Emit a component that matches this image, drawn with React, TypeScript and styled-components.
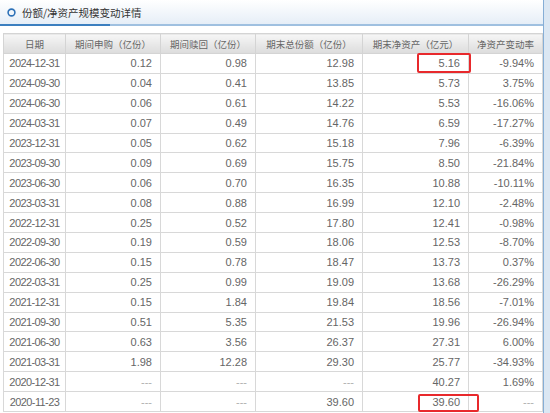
import React from "react";
import styled, { createGlobalStyle } from "styled-components";

const Global = createGlobalStyle`
  html, body { margin: 0; padding: 0; background: #fff; }
  body { font-family: "Liberation Sans", "Noto Sans CJK SC", sans-serif; }
`;

const Page = styled.div`
  display: flex;
  width: 550px;
  height: 413px;
  overflow: hidden;
`;

const Main = styled.div`
  width: 543px;
  display: flex;
  flex-direction: column;
`;

const Side = styled.div`
  flex: 1;
  border-left: 1px solid #86aed6;
  background: #dbe7f3;
`;

const TitleBar = styled.div`
  height: 24px;
  display: flex;
  align-items: center;
  gap: 6px;
  padding-left: 7px;
  background: linear-gradient(#ffffff, #e6eef7);
  border-bottom: 2px solid #9fc0e0;
  position: relative;
  &::after {
    content: "";
    position: absolute;
    left: 0;
    bottom: -2px;
    width: 110px;
    height: 2px;
    background: #3c7fc0;
  }
`;

const TitleText = styled.span`
  font-family: "Noto Sans CJK SC", sans-serif;
  font-size: 10.5px;
  color: #333;
`;

const TableWrap = styled.div`
  position: relative;
  margin: 7px 0 0 3px;
  width: 539px;
`;

const Table = styled.table`
  border-collapse: collapse;
  width: 539px;
  table-layout: fixed;
`;

const Th = styled.th`
  height: 19px;
  padding: 0;
  font-weight: normal;
  font-family: "Noto Sans CJK SC", sans-serif;
  font-size: 9.5px;
  color: #666;
  text-align: center;
  background: linear-gradient(#f6f6f6, #dcdcdc);
  border: 1px solid #d4d4d4;
  white-space: nowrap;
  overflow: hidden;
`;

const Td = styled.td<{ $center?: boolean }>`
  height: 18.9px;
  padding: 0 ${(p) => (p.$center ? "0" : "8px")} 0 0;
  color: #666;
  text-align: ${(p) => (p.$center ? "center" : "right")};
  letter-spacing: ${(p) => (p.$center ? "-0.6px" : "0")};
  border: 1px solid #d8d8d8;
  font-family: "Liberation Sans", sans-serif;
  font-size: 11px;
  white-space: nowrap;
`;

const Dash = styled.span`
  color: #b0b0b0;
  letter-spacing: 0;
`;

const Mark = styled.div<{ $l: number; $t: number; $w: number; $h: number }>`
  position: absolute;
  left: ${(p) => p.$l}px;
  top: ${(p) => p.$t}px;
  width: ${(p) => p.$w}px;
  height: ${(p) => p.$h}px;
  border: 2px solid #e8292c;
  border-radius: 2px;
  box-sizing: border-box;
  pointer-events: none;
`;

const widths = [62, 95, 95, 107, 106, 74];
const headers = ["日期", "期间申购（亿份）", "期间赎回（亿份）", "期末总份额（亿份）", "期末净资产（亿元）", "净资产变动率"];

const rows: string[][] = [
  ["2024-12-31", "0.12", "0.98", "12.98", "5.16", "-9.94%"],
  ["2024-09-30", "0.04", "0.41", "13.85", "5.73", "3.75%"],
  ["2024-06-30", "0.06", "0.61", "14.22", "5.53", "-16.06%"],
  ["2024-03-31", "0.07", "0.49", "14.76", "6.59", "-17.27%"],
  ["2023-12-31", "0.05", "0.62", "15.18", "7.96", "-6.39%"],
  ["2023-09-30", "0.09", "0.69", "15.75", "8.50", "-21.84%"],
  ["2023-06-30", "0.06", "0.70", "16.35", "10.88", "-10.11%"],
  ["2023-03-31", "0.08", "0.88", "16.99", "12.10", "-2.48%"],
  ["2022-12-31", "0.25", "0.52", "17.80", "12.41", "-0.98%"],
  ["2022-09-30", "0.19", "0.59", "18.06", "12.53", "-8.70%"],
  ["2022-06-30", "0.15", "0.78", "18.47", "13.73", "0.37%"],
  ["2022-03-31", "0.25", "0.99", "19.09", "13.68", "-26.29%"],
  ["2021-12-31", "0.15", "1.84", "19.84", "18.56", "-7.01%"],
  ["2021-09-30", "0.51", "5.35", "21.53", "19.96", "-26.94%"],
  ["2021-06-30", "0.63", "3.56", "26.37", "27.31", "6.00%"],
  ["2021-03-31", "1.98", "12.28", "29.30", "25.77", "-34.93%"],
  ["2020-12-31", "---", "---", "---", "40.27", "1.69%"],
  ["2020-11-23", "---", "---", "39.60", "39.60", "---"],
];

function Ring() {
  return (
    <svg width="9" height="9" viewBox="0 0 9 9">
      <circle cx="4.5" cy="4.5" r="3.4" fill="none" stroke="#2f72b8" strokeWidth="1.6" />
    </svg>
  );
}

export default function App() {
  return (
    <Page>
      <Global />
      <Main>
        <TitleBar>
          <Ring />
          <TitleText>份额/净资产规模变动详情</TitleText>
        </TitleBar>
        <TableWrap>
          <Table>
            <colgroup>
              {widths.map((w, i) => (
                <col key={i} style={{ width: w }} />
              ))}
            </colgroup>
            <thead>
              <tr>
                {headers.map((h) => (
                  <Th key={h}>{h}</Th>
                ))}
              </tr>
            </thead>
            <tbody>
              {rows.map((r) => (
                <tr key={r[0]}>
                  {r.map((c, i) => (
                    <Td key={i} $center={i === 0}>
                      {c === "---" ? <Dash>---</Dash> : c}
                    </Td>
                  ))}
                </tr>
              ))}
            </tbody>
          </Table>
          <Mark $l={414} $t={20} $w={54} $h={20} />
          <Mark $l={415} $t={361} $w={61} $h={18} />
        </TableWrap>
      </Main>
      <Side />
    </Page>
  );
}
